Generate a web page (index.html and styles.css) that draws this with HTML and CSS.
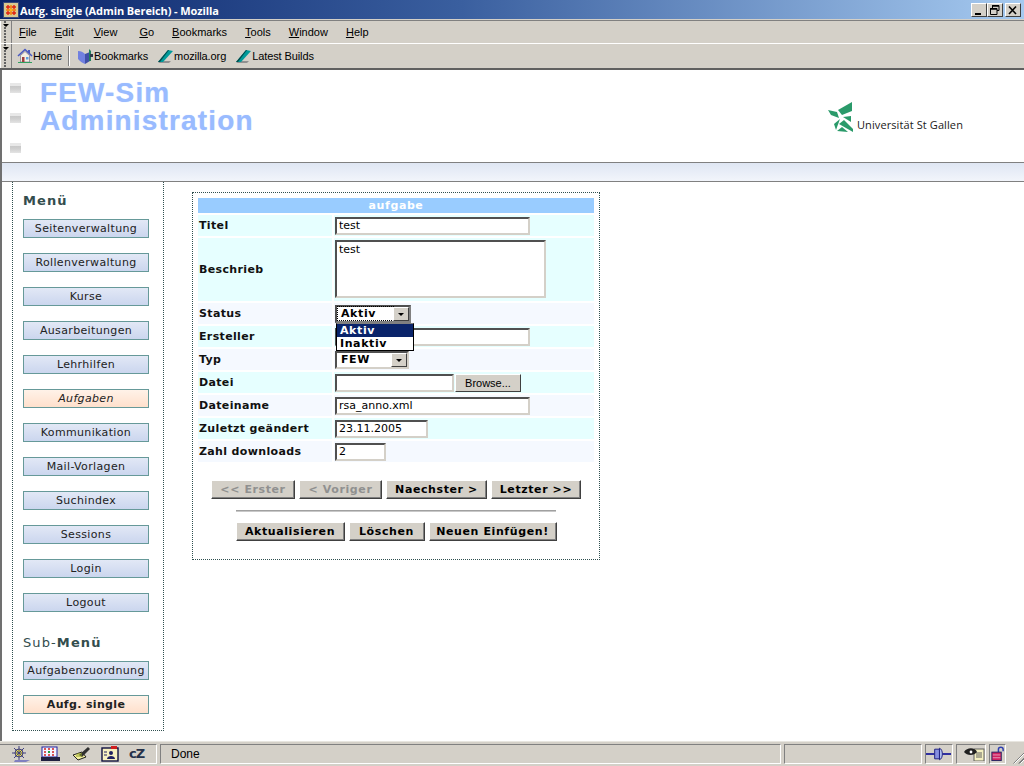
FILE: index.html
```html
<!DOCTYPE html>
<html lang="de">
<head>
<meta charset="utf-8">
<title>Aufg. single (Admin Bereich) - Mozilla</title>
<link rel="stylesheet" href="styles.css">
</head>
<body>
<div class="window">
  <header class="titlebar">
    <svg class="app-icon" width="16" height="16" viewBox="0 0 16 16"><rect width="16" height="16" fill="#3a4a7a"/><rect x="1" y="1" width="14" height="14" fill="#d8c890"/><path d="M3 5h10M3 8h10M3 11h10M5 3v10M8 3v10M11 3v10" stroke="#e02010" stroke-width="1.4"/><path d="M8 3v10M3 8h10" stroke="#ffe020" stroke-width="1"/></svg>
    <span class="title-text">Aufg. single (Admin Bereich) - Mozilla</span>
    <span class="win-buttons">
      <span class="win-btn"><svg width="12" height="11" viewBox="0 0 12 11"><rect x="2" y="8" width="6" height="2" fill="#000"/></svg></span>
      <span class="win-btn"><svg width="12" height="11" viewBox="0 0 12 11"><path d="M3.5 3V.5h6.5v5H8M1.5 3.5h6.5v6H1.5z" fill="none" stroke="#000"/><path d="M3 1h7M1 4h7" stroke="#000" stroke-width="1.4"/></svg></span>
      <span class="win-btn close"><svg width="12" height="11" viewBox="0 0 12 11"><path d="M2 1.5l7 7.5M9 1.5l-7 7.5" stroke="#000" stroke-width="1.6"/></svg></span>
    </span>
  </header>

  <div class="chrome-row menubar">
    <span class="grip"></span>
    <nav class="menu">
      <span><u>F</u>ile</span><span><u>E</u>dit</span><span><u>V</u>iew</span><span><u>G</u>o</span><span><u>B</u>ookmarks</span><span><u>T</u>ools</span><span><u>W</u>indow</span><span><u>H</u>elp</span>
    </nav>
  </div>

  <div class="chrome-row toolbar">
    <span class="grip"></span>
    <nav class="links">
      <span class="link home">
        <svg width="16" height="16" viewBox="0 0 16 16"><path d="M1 8L8 1.5 15 8" fill="none" stroke="#4a5ac0" stroke-width="1.6"/><path d="M3.5 7.5L8 3.5l4.5 4V14h-9z" fill="#f4f0e4" stroke="#606080" stroke-width=".6"/><rect x="5" y="9" width="2.5" height="5" fill="#a04040"/><rect x="9" y="9" width="2.5" height="2.5" fill="#60a0e0"/><rect x="1" y="14" width="14" height="1" fill="#30a060"/><rect x="11" y="2" width="2" height="3" fill="#4a5ac0"/></svg>
        Home
      </span>
      <span class="sep"></span>
      <span class="link bm">
        <svg width="17" height="17" viewBox="0 0 17 17"><path d="M1 3c3 0 5 1 7 3v10c-3-1-5-3-7-5z" fill="#7080e0"/><path d="M8 6l5-2v9l-5 3z" fill="#4050a8"/><path d="M12 1l2 2v10h-2z" fill="#208060"/><path d="M13 6h3v3h-3z" fill="#303848"/></svg>
        Bookmarks
      </span>
      <span class="link">
        <svg class="bm-leaf" width="17" height="16" viewBox="0 0 17 16"><path d="M1 15h11l2-2H4z" fill="#909090"/><path d="M1 14L11 2l5 1L6 14z" fill="#009a9a"/><path d="M1 14L11 2l1 0L3 14z" fill="#004a4a"/></svg>
        mozilla.org
      </span>
      <span class="link">
        <svg class="bm-leaf" width="17" height="16" viewBox="0 0 17 16"><path d="M1 15h11l2-2H4z" fill="#909090"/><path d="M1 14L11 2l5 1L6 14z" fill="#009a9a"/><path d="M1 14L11 2l1 0L3 14z" fill="#004a4a"/></svg>
        Latest Builds
      </span>
    </nav>
  </div>

  <div class="viewport">
    <div class="page-head">
      <div class="broken-col">
        <span class="broken"></span><span class="broken"></span><span class="broken"></span>
      </div>
      <div class="brand">FEW-Sim<br>Administration</div>
      <div class="hsg">
        <svg width="26" height="30" viewBox="0 0 26 30"><g fill="#2a9a6a"><path d="M0 8l9 2 2 6-8-3z"/><path d="M10 8l14-8v9l-10 4z"/><path d="M15 15l8 5v-6z"/><path d="M12 17l-6 5 2 6z"/><path d="M11 22l14 8v-3l-9-9z"/><path d="M9 29l11 1-6-5z"/></g></svg>
        <span class="hsg-name">Universität St Gallen</span>
      </div>
    </div>
    <div class="page-band"></div>

    <div class="page-main">
      <aside class="sidebar">
        <h2 class="side-head">Menü</h2>
        <nav class="side-nav">
          <a class="side-btn">Seitenverwaltung</a>
          <a class="side-btn">Rollenverwaltung</a>
          <a class="side-btn">Kurse</a>
          <a class="side-btn">Ausarbeitungen</a>
          <a class="side-btn">Lehrhilfen</a>
          <a class="side-btn active italic">Aufgaben</a>
          <a class="side-btn">Kommunikation</a>
          <a class="side-btn">Mail-Vorlagen</a>
          <a class="side-btn">Suchindex</a>
          <a class="side-btn">Sessions</a>
          <a class="side-btn">Login</a>
          <a class="side-btn">Logout</a>
        </nav>
        <h2 class="side-head sub"><span class="thin">Sub-</span>Menü</h2>
        <nav class="side-nav">
          <a class="side-btn">Aufgabenzuordnung</a>
          <a class="side-btn active strong">Aufg. single</a>
        </nav>
      </aside>

      <section class="panel">
        <div class="form-title">aufgabe</div>
        <div class="form-grid">
          <div class="lab cyan h21">Titel</div>
          <div class="val cyan"><input class="field w195" value="test"></div>

          <div class="lab cyan h63">Beschrieb</div>
          <div class="val cyan top"><textarea class="area">test</textarea></div>

          <div class="lab pale h21">Status</div>
          <div class="val pale">
            <div class="select w76 focus"><span class="sel-text"><span class="dots">Aktiv</span></span><span class="arrow"></span></div>
            <div class="dropdown">
              <div class="opt on">Aktiv</div>
              <div class="opt">Inaktiv</div>
            </div>
          </div>

          <div class="lab cyan h21">Ersteller</div>
          <div class="val cyan"><input class="field w195"></div>

          <div class="lab pale h21">Typ</div>
          <div class="val pale"><div class="select w74"><span class="sel-text">FEW</span><span class="arrow"></span></div></div>

          <div class="lab cyan h21">Datei</div>
          <div class="val cyan"><input class="field w119"><button class="browse" type="button">Browse...</button></div>

          <div class="lab pale h21">Dateiname</div>
          <div class="val pale"><input class="field w195" value="rsa_anno.xml"></div>

          <div class="lab cyan h21">Zuletzt geändert</div>
          <div class="val cyan"><input class="field w93" value="23.11.2005"></div>

          <div class="lab pale h21">Zahl downloads</div>
          <div class="val pale"><input class="field w51" value="2"></div>
        </div>

        <div class="btn-row pager">
          <button class="act off w84" type="button">&lt;&lt; Erster</button>
          <button class="act off w83" type="button">&lt; Voriger</button>
          <button class="act w101" type="button">Naechster &gt;</button>
          <button class="act w90" type="button">Letzter &gt;&gt;</button>
        </div>
        <hr class="rule">
        <div class="btn-row">
          <button class="act w109" type="button">Aktualisieren</button>
          <button class="act w76b" type="button">Löschen</button>
          <button class="act w128" type="button">Neuen Einfügen!</button>
        </div>
      </section>
    </div>
  </div>

  <footer class="statusbar">
    <div class="st icons-panel">
      <svg width="22" height="18" viewBox="0 0 22 18"><circle cx="10" cy="8" r="4" fill="#f4e840" stroke="#404080"/><path d="M10 1v14M3 8h14M5 3l10 10M15 3L5 13" stroke="#404080"/><path d="M6 15h15l-4 2H5z" fill="#8080c0"/></svg>
      <svg width="20" height="16" viewBox="0 0 20 16"><rect x="1" y="1" width="15" height="10" fill="#f4f4ff" stroke="#2020a0"/><path d="M3 3h2M7 3h2M11 3h2M3 6h2M11 6h2M3 9h2M7 9h2M11 9h2" stroke="#d02020" stroke-width="1.5"/><rect x="7" y="5" width="2" height="2" fill="#20a040"/><rect y="11" width="19" height="4" fill="#202040"/></svg>
      <svg width="20" height="16" viewBox="0 0 20 16"><path d="M2 9l5 5 8-3-4-5z" fill="#f4f0a0" stroke="#202020"/><path d="M8 9l9-8 2 2-8 8z" fill="#303030"/><path d="M6 8h5M5 10h6" stroke="#90a020"/></svg>
      <svg width="18" height="16" viewBox="0 0 18 16"><rect x="1" y="2" width="16" height="13" fill="#f8f0c0" stroke="#101040" stroke-width="1.4"/><rect x="10" y="0" width="6" height="3" fill="#d02020"/><circle cx="10" cy="7" r="2" fill="#202060"/><path d="M6 13c0-4 8-4 8 0z" fill="#202060"/><path d="M3 6h3M3 9h3" stroke="#202060"/></svg>
      <span class="cz">cZ</span>
    </div>
    <div class="st done">Done</div>
    <div class="st blank"></div>
    <div class="st plug"><svg width="27" height="14" viewBox="0 0 27 14"><path d="M0 7h9M17 7h9" stroke="#3030a0" stroke-width="2"/><path d="M9 2h5v10H9z" fill="#8890e0" stroke="#202080"/><path d="M14 1c4 1 4 11 0 12z" fill="#b0c0f0" stroke="#202080"/></svg></div>
    <div class="st eye"><svg width="22" height="14" viewBox="0 0 22 14"><rect x="11" y="2" width="10" height="12" fill="#f4f0c0" stroke="#606060"/><path d="M13 6h6M13 8h6M13 10h6" stroke="#606060"/><path d="M1 5c3-5 11-5 13 0-3 4-10 4-13 0z" fill="#202020"/><circle cx="8" cy="5" r="1.4" fill="#fff"/></svg></div>
    <div class="st lock"><svg width="16" height="16" viewBox="0 0 16 16"><path d="M9 6V3c0-3 5-3 5 0v2" fill="none" stroke="#3040b0" stroke-width="1.6"/><rect x="2" y="6" width="10" height="9" fill="#d02060" stroke="#202060"/><path d="M3 9h8M3 12h8" stroke="#e8a0c0"/></svg></div>
    <span class="size-grip"></span>
  </footer>
</div>
</body>
</html>
```

FILE: styles.css
```css
* { box-sizing: border-box; }
html, body { margin: 0; padding: 0; height: 100%; overflow: hidden; }
body { background: #d4d0c8; font-family: "DejaVu Sans", Verdana, sans-serif; font-size: 11px; color: #000; }

.window { width: 1024px; height: 766px; display: flex; flex-direction: column; }

/* title bar */
.titlebar { height: 20px; flex: none; display: flex; align-items: center; padding: 1px 2px 0 3px; border-bottom: 1px solid #d4d0c8; background: linear-gradient(90deg, #0a246a 0%, #3a5f9f 45%, #a6caf0 100%); }
.app-icon { flex: none; }
.title-text { margin-left: 1px; color: #fff; font-family: "Open Sans", "Liberation Sans", sans-serif; font-weight: 700; font-size: 11px; letter-spacing: -.1px; white-space: nowrap; }
.win-buttons { margin-left: auto; display: flex; margin-right: 1px; }
.win-btn { width: 16px; height: 14px; background: #d4d0c8; border: 1px solid; border-color: #fff #404040 #404040 #fff; display: flex; align-items: center; justify-content: center; }
.win-btn.close { margin-left: 2px; }

/* menu + toolbar */
.chrome-row { display: flex; flex: none; background: #d4d0c8; font-family: "Liberation Sans", Arial, sans-serif; font-size: 11px; color: #000; }
.menubar { height: 24px; border-top: 1px solid #808080; border-bottom: 1px solid #fff; }
.toolbar { height: 26px; border-bottom: 2px solid #606060; }
.grip { width: 12px; flex: none; position: relative; border-right: 1px solid #808080; background: radial-gradient(circle at 1px 1px, #606060 .7px, transparent 1px) 4px 9px / 3px 3px repeat-y; box-shadow: inset 1px 0 #fff; }
.grip::before { content: ""; position: absolute; left: 3px; top: 3px; border: 3px solid transparent; border-top-color: #000; border-bottom: 0; }
.menu { display: flex; align-items: center; padding-left: 7px; }
.menu span { margin-right: 18px; white-space: nowrap; }
.menu span:nth-child(2) { margin-right: 20px; }
.menu span:nth-child(3) { margin-right: 22px; }
.links { display: flex; align-items: center; padding-left: 5px; }
.link { display: flex; align-items: center; white-space: nowrap; margin-right: 9px; letter-spacing: -.1px; }
.link.home { margin-right: 6px; }
.link.bm { margin-right: 9px; }
.sep { width: 2px; height: 20px; margin-right: 7px; border-left: 1px solid #808080; border-right: 1px solid #fff; }

/* content area */
.viewport { flex: 1; min-height: 0; background: #fff; border-left: 2px solid #707070; display: flex; flex-direction: column; }
.page-head { height: 92px; flex: none; display: flex; padding-left: 8px; }
.broken-col { width: 30px; display: flex; flex-direction: column; gap: 20px; padding-top: 13px; }
.broken { width: 11px; height: 10px; background: linear-gradient(#e8e8e8 30%, #c8c8c8 30%, #d0d0d0 60%, #e4e4e4); }
.brand { padding-top: 9px; font-family: "Liberation Sans", Arial, sans-serif; font-weight: 700; font-size: 28px; line-height: 28px; letter-spacing: 1.15px; color: #99bbff; transform-origin: left top; text-shadow: 0 0 1px #c4d6ff; }
.hsg { margin-left: auto; margin-right: 61px; padding-top: 32px; display: flex; align-items: flex-end; height: 62px; }
.hsg-name { margin-left: 3px; margin-bottom: 0; font-family: "Open Sans", "Liberation Sans", sans-serif; font-size: 11px; line-height: 15px; color: #1a1a1a; letter-spacing: .1px; white-space: nowrap; }
.page-band { height: 20px; flex: none; border-top: 1px solid #808080; border-bottom: 1px solid #808080; background: linear-gradient(#dfe6f3, #f2f5fb); }
.page-main { flex: 1; min-height: 0; display: flex; align-items: flex-start; padding-left: 10px; }

/* sidebar */
.sidebar { width: 152px; height: 549px; flex: none; padding: 10px 10px 0; border: 1px dotted #2f4f4f; border-top: 0; }
.side-head { margin: 0 0 9px; font-size: 13px; line-height: 18px; font-weight: 700; letter-spacing: 1.1px; color: #334d4d; }
.side-head.sub { margin: 22px 0 9px; }
.thin { font-weight: 400; }
.side-nav { display: flex; flex-direction: column; gap: 15px; }
.side-btn { height: 19px; width: 126px; display: flex; align-items: center; justify-content: center; border: 1px solid #669999; background: linear-gradient(#e2e8f6, #cbd6ee); font-size: 11px; letter-spacing: .35px; color: #222; white-space: nowrap; }
.side-btn.active { background: linear-gradient(#fff2e8, #ffe0cc); }
.side-btn.italic { font-style: italic; }
.side-btn.strong { font-weight: 700; }

/* form panel */
.panel { width: 408px; height: 368px; margin: 10px 0 0 28px; padding: 5px; border: 1px dotted #2f4f4f; }
.form-title { height: 15px; background: #99ccff; color: #fff; text-align: center; font-weight: 700; font-size: 11px; line-height: 15px; letter-spacing: .6px; }
.form-grid { margin-top: 2px; display: grid; grid-template-columns: 134px 260px; gap: 2px; }
.cyan { background: #e6ffff; }
.pale { background: #f5f9ff; }
.lab { display: flex; align-items: center; padding-left: 1px; font-weight: 700; letter-spacing: .35px; color: #111; white-space: nowrap; }
.h21 { height: 21px; }
.h63 { height: 63px; }
.val { display: flex; align-items: center; padding-left: 1px; position: relative; }
.val.top { align-items: flex-start; padding-top: 2px; }
.field, .area { display: block; height: 18px; margin: 0; padding: 0 2px; border: 2px solid; border-color: #505050 #d4d0c8 #d4d0c8 #505050; background: #fff; font-family: "DejaVu Sans", Verdana, sans-serif; font-size: 11px; color: #000; outline: 0; border-radius: 0; }
.area { width: 211px; height: 58px; resize: none; overflow: hidden; padding: 1px 2px; }
.w195 { width: 195px; }
.w119 { width: 119px; }
.w93 { width: 93px; }
.w51 { width: 51px; }
.browse { width: 66px; height: 18px; margin: 0 0 0 1px; padding: 0; background: #d4d0c8; border: 1px solid; border-color: #fff #404040 #404040 #fff; font-family: "Liberation Sans", Arial, sans-serif; font-size: 11px; color: #000; }
.select { height: 18px; display: flex; border: 2px solid; border-color: #505050 #d4d0c8 #d4d0c8 #505050; background: #fff; font-weight: 700; letter-spacing: .6px; }
.select.focus { border-color: #505050 #808080 #808080 #505050; }
.w76 { width: 76px; }
.w74 { width: 74px; }
.sel-text { flex: 1; display: flex; align-items: center; padding-left: 4px; }
.dots { outline: 1px dotted #000; outline-offset: 0; display: block; width: 55px; margin-left: -3px; padding-left: 3px; line-height: 13px; }
.arrow { width: 16px; flex: none; position: relative; background: #d4d0c8; border: 1px solid; border-color: #fff #404040 #404040 #fff; }
.arrow::after { content: ""; position: absolute; left: 4px; top: 5px; border: 3px solid transparent; border-top-color: #000; border-bottom: 0; }
.dropdown { position: absolute; left: 2px; top: 20px; width: 78px; height: 28px; z-index: 2; background: #fff; border: 1px solid #000; border-top-color: #808080; font-weight: 700; letter-spacing: .6px; }
.opt { height: 13px; line-height: 13px; padding-left: 3px; }
.opt.on { background: #0a246a; color: #fff; }

/* action buttons */
.btn-row { display: flex; justify-content: center; gap: 4px; }
.pager { margin-top: 18px; padding-left: 0; }
.act { height: 19px; padding: 0; background: #d4d0c8; border: 1px solid; border-color: #fff #404040 #404040 #fff; box-shadow: 1px 1px 0 #808080 inset; font-family: "DejaVu Sans", Verdana, sans-serif; font-size: 11px; font-weight: 700; letter-spacing: .6px; color: #000; white-space: nowrap; }
.act { box-shadow: inset -1px -1px 0 #808080; }
.act.off { color: #909090; }
.w84 { width: 84px; }
.w83 { width: 83px; }
.w101 { width: 101px; }
.w90 { width: 90px; }
.w109 { width: 109px; }
.w76b { width: 76px; }
.w128 { width: 128px; }
.rule { width: 320px; height: 2px; margin: 11px auto 10px; border: 0; background: #a0a0a0; border-bottom: 1px solid #c8c8c8; }

/* status bar */
.statusbar { height: 25px; flex: none; display: flex; align-items: center; gap: 3px; padding: 2px 0 3px; border-top: 1px solid #e8e6e0; background: #d4d0c8; font-family: "Liberation Sans", Arial, sans-serif; font-size: 11px; position: relative; }
.st { height: 20px; flex: none; display: flex; align-items: center; border: 1px solid; border-color: #808080 #fff #fff #808080; }
.icons-panel { width: 157px; gap: 10px; padding-left: 9px; border-left: 0; }
.cz { font-family: "DejaVu Sans", sans-serif; font-weight: 700; font-size: 13px; line-height: 13px; letter-spacing: -1px; color: #26324a; }
.done { width: 621px; padding-left: 10px; font-size: 12px; }
.blank { width: 138px; }
.plug { width: 28px; padding-left: 0; }
.eye { width: 30px; padding-left: 6px; }
.lock { width: 17px; }
.size-grip { width: 14px; height: 14px; margin-left: 3px; margin-top: 6px; background: repeating-linear-gradient(135deg, transparent 0 2px, #808080 2px 3px, #fff 3px 4px); clip-path: polygon(100% 0, 100% 100%, 0 100%); }
```
